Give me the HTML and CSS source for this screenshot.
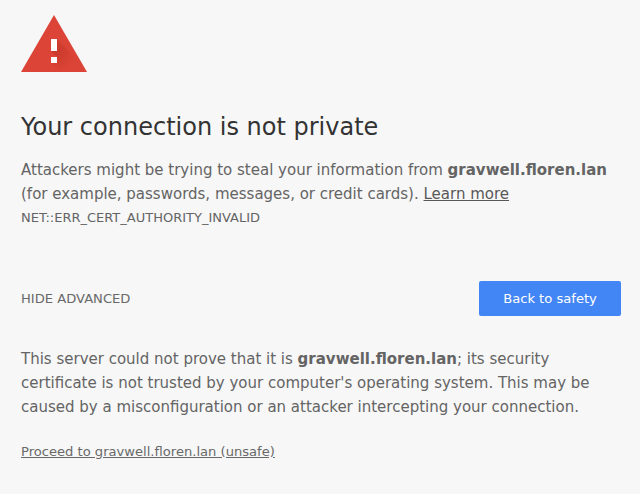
FILE: index.html
```html
<!DOCTYPE html>
<html lang="en">
<head>
<meta charset="utf-8">
<title>Privacy error</title>
<link rel="stylesheet" href="styles.css">
</head>
<body>
<main class="interstitial">
  <svg class="icon" width="72" height="72" viewBox="0 0 72 72" aria-hidden="true">
    <defs><radialGradient id="shade" gradientUnits="userSpaceOnUse" cx="33" cy="43" r="23"><stop offset="0" stop-color="#a52714" stop-opacity=".36"/><stop offset="1" stop-color="#a52714" stop-opacity="0"/></radialGradient></defs>
    <path fill="#db4437" d="M0 65L33 8l33 57z"/>
    <path fill="url(#shade)" d="M36 32l30 30v3H39l-9-9 6-6-6-6z"/>
    <path fill="#fff" d="M30 32h6v12h-6zM30 50h6v6h-6z"/>
  </svg>
  <h1>Your connection is not private</h1>
  <p>Attackers might be trying to steal your information from <strong>gravwell.floren.lan</strong> (for example, passwords, messages, or credit cards). <a href="#">Learn more</a></p>
  <div class="error-code">NET::ERR_CERT_AUTHORITY_INVALID</div>
  <div class="nav">
    <button class="details-button">HIDE ADVANCED</button>
    <button class="primary-button">Back to safety</button>
  </div>
  <p class="details">This server could not prove that it is <strong>gravwell.floren.lan</strong>; its security certificate is not trusted by your computer's operating system. This may be caused by a misconfiguration or an attacker intercepting your connection.</p>
  <a class="proceed" href="#">Proceed to gravwell.floren.lan (unsafe)</a>
</main>
</body>
</html>
```
FILE: styles.css
```css
body {
  margin: 0;
  background: #f7f7f7;
  color: #646464;
  font-family: "DejaVu Sans", sans-serif;
  font-size: 15px;
  line-height: 24px;
  overflow: hidden;
}
.interstitial {
  width: 600px;
  padding: 7px 19px 0 21px;
}
.icon {
  display: block;
  margin-bottom: 33px;
}
h1 {
  margin: 0 0 16px;
  color: #333;
  font-size: 24px;
  font-weight: 400;
  line-height: 30px;
}
p {
  margin: 0;
}
a {
  color: #585858;
  text-decoration: underline;
}
.error-code {
  font-size: 13px;
}
.nav {
  display: flex;
  align-items: center;
  justify-content: space-between;
  margin: 51px 0 31px;
}
button {
  border: 0;
  font: 13.1px/15px "DejaVu Sans", sans-serif;
}
.details-button {
  padding: 0;
  background: none;
  color: #696969;
}
.primary-button {
  width: 142px;
  height: 35px;
  border-radius: 2px;
  background: #4285f4;
  color: #fff;
}
.proceed {
  display: inline-block;
  margin-top: 21px;
  color: #696969;
  font-size: 13.1px;
}
```
